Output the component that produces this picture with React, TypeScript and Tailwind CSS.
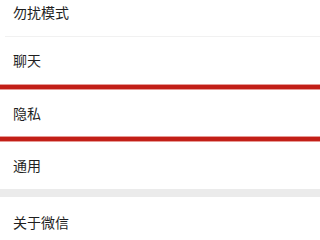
const rows = ['勿扰模式', '聊天', '隐私', '通用'];

function Row({ label, h }: { label: string; h: string }) {
  return (
    <div className={`flex items-center pl-[13px] text-[14px] text-[#1f1f1f] ${h}`}>
      {label}
    </div>
  );
}

function RedMark() {
  return <div className="h-[6px] bg-[#c21f17] border-y border-[#e79a96]" />;
}

export default function App() {
  return (
    <div
      className="w-[320px] h-[240px] overflow-hidden bg-white"
      style={{ fontFamily: '"Noto Sans CJK SC", "Noto Sans", sans-serif' }}
    >
      <div className="-mt-[12px] flex flex-col">
        <Row label={rows[0]} h="h-[48px]" />
        <div className="ml-[5px] h-px bg-[#f1f1f1]" />
        <Row label={rows[1]} h="h-[47px]" />
        <RedMark />
        <Row label={rows[2]} h="h-[46px]" />
        <RedMark />
        <Row label={rows[3]} h="h-[47px]" />
        <div className="h-[8px] bg-[#ebebeb]" />
        <Row label="关于微信" h="h-[50px]" />
      </div>
    </div>
  );
}
